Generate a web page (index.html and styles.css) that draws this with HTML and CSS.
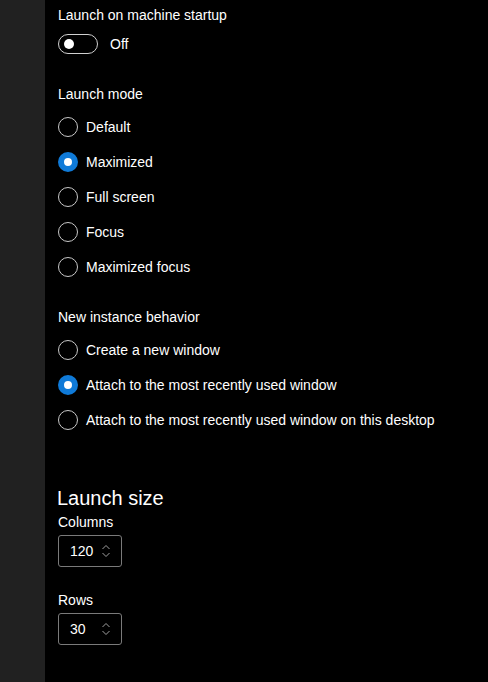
FILE: index.html
```html
<!DOCTYPE html>
<html>
<head>
<meta charset="utf-8">
<link rel="stylesheet" href="styles.css">
</head>
<body>
<div class="app">
  <aside class="side"></aside>
  <main class="content">
    <div class="label">Launch on machine startup</div>
    <div class="toggle-row">
      <span class="toggle"><span class="knob"></span></span>
      <span class="toggle-text">Off</span>
    </div>

    <div class="label group-title">Launch mode</div>
    <div class="radios">
      <div class="radio"><span class="circle"></span><span>Default</span></div>
      <div class="radio"><span class="circle on"></span><span>Maximized</span></div>
      <div class="radio"><span class="circle"></span><span>Full screen</span></div>
      <div class="radio"><span class="circle"></span><span>Focus</span></div>
      <div class="radio"><span class="circle"></span><span>Maximized focus</span></div>
    </div>

    <div class="label group-title2">New instance behavior</div>
    <div class="radios">
      <div class="radio"><span class="circle"></span><span>Create a new window</span></div>
      <div class="radio"><span class="circle on"></span><span>Attach to the most recently used window</span></div>
      <div class="radio"><span class="circle"></span><span>Attach to the most recently used window on this desktop</span></div>
    </div>

    <h2 class="heading">Launch size</h2>
    <div class="label">Columns</div>
    <div class="spin">
      <span class="spin-val">120</span>
      <svg class="chev" width="10" height="16" viewBox="0 0 10 16"><path d="M1.5 6 L5 2.5 L8.5 6 M1.5 10 L5 13.5 L8.5 10" fill="none" stroke="#a0a0a0" stroke-width="1"/></svg>
    </div>
    <div class="label rows-label">Rows</div>
    <div class="spin">
      <span class="spin-val">30</span>
      <svg class="chev" width="10" height="16" viewBox="0 0 10 16"><path d="M1.5 6 L5 2.5 L8.5 6 M1.5 10 L5 13.5 L8.5 10" fill="none" stroke="#a0a0a0" stroke-width="1"/></svg>
    </div>
  </main>
</div>
</body>
</html>
```
FILE: styles.css
```css
* { box-sizing: border-box; }
html, body { margin: 0; padding: 0; background: #000; }
body {
  font-family: "Segoe UI", "Liberation Sans", Arial, sans-serif;
  font-size: 14px;
  color: #fff;
}
.app { display: flex; height: 682px; overflow: hidden; }
.side { width: 45px; flex: none; background: #212121; }
.content { flex: 1; padding: 5px 0 0 13px; }
.label { height: 20px; line-height: 20px; }
.toggle-row { display: flex; align-items: center; height: 20px; margin-top: 9px; }
.toggle {
  width: 40px; height: 20px; border: 1px solid #d0d0d0; border-radius: 10px;
  display: flex; align-items: center; padding-left: 5px;
}
.knob { width: 10px; height: 10px; border-radius: 50%; background: #fff; }
.toggle-text { margin-left: 12px; }
.group-title { margin-top: 30px; }
.group-title2 { margin-top: 23px; }
.radios { margin-top: 5px; }
.radio { display: flex; align-items: center; height: 35px; }
.circle {
  width: 20px; height: 20px; border-radius: 50%; border: 1px solid #c8c8c8;
  margin-right: 8px; flex: none;
}
.circle.on {
  border: 6px solid #0f7ad8; background: #fff;
}
.heading {
  margin: 47px 0 0 -1px; font-size: 20px; font-weight: normal; height: 28px; line-height: 28px;
}
.spin {
  margin-top: 3px; width: 64px; height: 32px; border: 1px solid #7a7a7a; border-radius: 3px;
  display: flex; align-items: center; padding-left: 11px;
}
.spin-val { flex: 1; }
.chev { margin-right: 10px; }
.rows-label { margin-top: 23px; }
```
